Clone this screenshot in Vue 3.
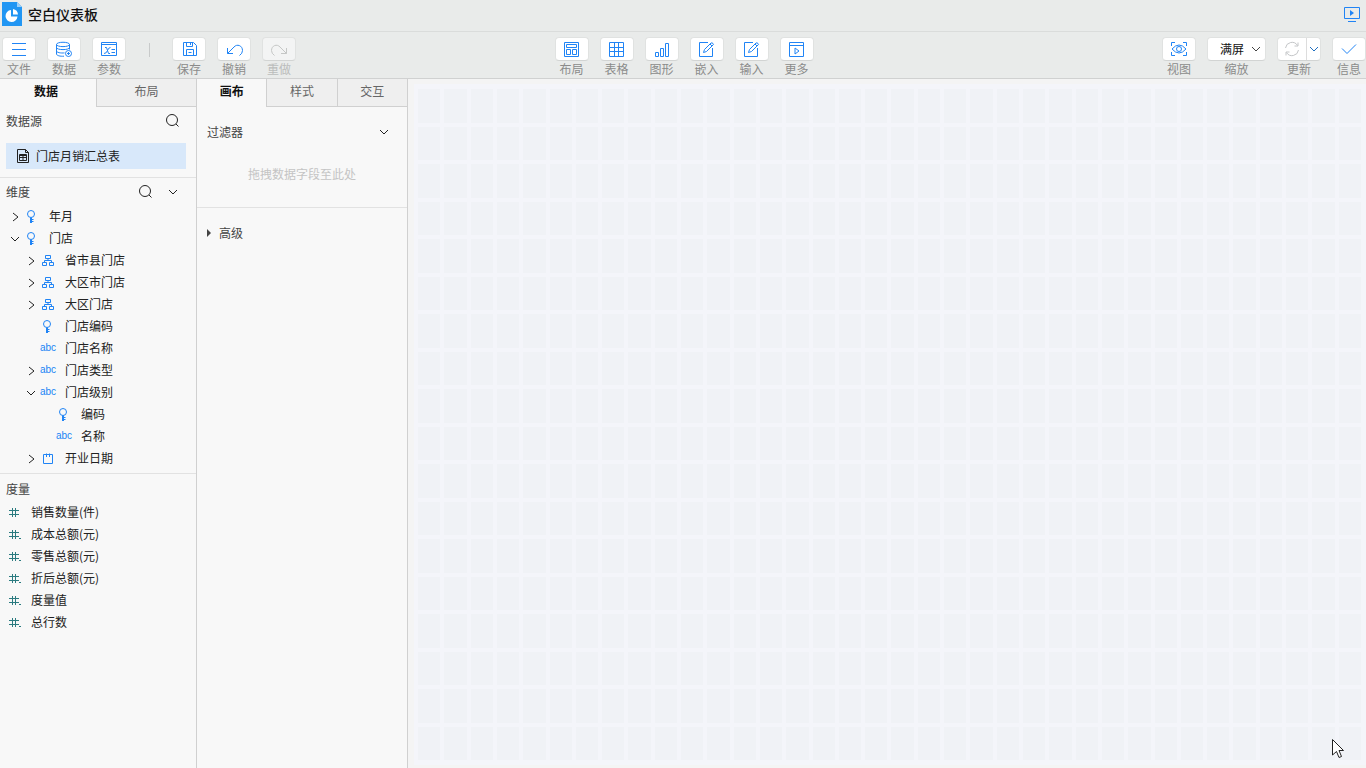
<script setup>
import { ref } from 'vue'

const icons = {
  file: 'M2 3.5H16M2 9.5H16M2 15.5H16',
  data: 'M1.5 4.5C1.5 1.5 14.5 1.5 14.5 4.5C14.5 7.3 1.5 7.3 1.5 4.5V14C1.5 15.5 5 16.5 9 16.2M14.5 4.5V9.5M1.5 7.5C1.5 10.3 14.5 10.3 14.5 7.5M1.5 10.8C1.5 12.6 6 13.3 9.5 12.9M10.5 13.5A3 3 0 1 0 16.5 13.5A3 3 0 1 0 10.5 13.5M12 13.5H15M13.5 12V15',
  params: 'M1.5 2.5H16.5V15.5H1.5ZM1.5 4.5H16.5M5 7.500H6.500L8.500 13.500H10M10.500 7.500Q8.500 7.500 7.500 10.500T4 13.500M11.500 9.500H15M11.500 12.500H15',
  save: 'M3.500 2.500H13.500L16.500 5.500V15.500H3.500ZM6.500 2.500V6.500H12.500V2.500M10.500 3V5M6.500 15.500V9.500H13.500V15.500M8.500 12.500H11.500',
  undo: 'M2.500 8V13.500H8M2.500 13.500L9 7C12 3.500 17.500 5.500 17.500 10.500Q17.500 13.500 14.500 15.500',
  redo: 'M16.500 8V13.500H11M16.500 13.500L10 7C7 3.500 1.500 5.500 1.500 10.500Q1.500 13.500 4.500 15.500',
  layout: 'M1.500 2.500H15.500V16.500H1.500ZM3.500 4.500H13.500V7.500H3.500ZM3.500 9.500H7.500V14.500H3.500ZM9.500 9.500H13.500V14.500H9.500Z',
  table: 'M1.500 2.500H15.500V16.500H1.500ZM1.500 7.500H15.500M1.500 11.500H15.500M6.500 2.500V16.500M10.500 2.500V16.500',
  chart: 'M2.500 12.500H5.500V16.500H2.500ZM7.500 8.500H10.500V16.500H7.500ZM12.500 3.500H15.500V16.500H12.500Z',
  edit: 'M10 2.500H1.500V16.500H14.500V8M5.500 12.500L6.500 9.500L13 3Q14 2.500 15 3.500T15 5L8.500 11.500ZM12 4L14 6',
  more: 'M1.500 2.500H15.500V16.500H1.500ZM1.500 5.500H15.500M7 8V14L11 11Z',
  view: 'M1.500 6V2.500H5M13 2.500H16.500V6M16.500 12V15.500H13M5 15.500H1.500V12M2 9Q9 1 16 9Q9 17 2 9ZM6.500 9A2.500 2.500 0 1 0 11.500 9A2.500 2.500 0 1 0 6.500 9',
  info: 'M2 8.500L7 13.500L16 4.500',
  refresh: 'M2.500 8A6.500 6.500 0 0 1 14.500 5.500M15 2.500V6H11.500M15.500 10A6.500 6.500 0 0 1 3.500 12.500M3 15.500V12H6.500',
}

const leftTools = [
  { icon: 'file', label: '文件' },
  { icon: 'data', label: '数据' },
  { icon: 'params', label: '参数' },
]
const historyTools = [
  { icon: 'save', label: '保存' },
  { icon: 'undo', label: '撤销' },
  { icon: 'redo', label: '重做', disabled: true },
]
const insertTools = [
  { icon: 'layout', label: '布局' },
  { icon: 'table', label: '表格' },
  { icon: 'chart', label: '图形' },
  { icon: 'edit', label: '嵌入' },
  { icon: 'edit', label: '输入' },
  { icon: 'more', label: '更多' },
]

const dimensions = [
  { name: '年月', level: 0, type: 'key', state: 'closed' },
  { name: '门店', level: 0, type: 'key', state: 'open' },
  { name: '省市县门店', level: 1, type: 'tree', state: 'closed' },
  { name: '大区市门店', level: 1, type: 'tree', state: 'closed' },
  { name: '大区门店', level: 1, type: 'tree', state: 'closed' },
  { name: '门店编码', level: 1, type: 'key' },
  { name: '门店名称', level: 1, type: 'abc' },
  { name: '门店类型', level: 1, type: 'abc', state: 'closed' },
  { name: '门店级别', level: 1, type: 'abc', state: 'open' },
  { name: '编码', level: 2, type: 'key' },
  { name: '名称', level: 2, type: 'abc' },
  { name: '开业日期', level: 1, type: 'date', state: 'closed' },
]
const typeIcons = {
  key: 'M3.500 6A3.500 3.500 0 1 0 10.500 6A3.500 3.500 0 1 0 3.500 6M6.500 9.500V15M7.500 9.500V15M7 11.500H9.500M7 13.500H9.500',
  tree: 'M5.500 3.500H10.500V6.500H5.500ZM8 6.500V8.500M4.500 10.500V8.500H11.500V10.500M2.500 10.500H6.500V13.500H2.500ZM9.500 10.500H13.500V13.500H9.500Z',
  date: 'M3.500 4.500H12.500V13.500H3.500ZM6.500 3.500V7M9.500 3.500V7',
}

const measures = [
  { name: '销售数量(件)', decimal: false },
  { name: '成本总额(元)', decimal: true },
  { name: '零售总额(元)', decimal: true },
  { name: '折后总额(元)', decimal: true },
  { name: '度量值', decimal: true },
  { name: '总行数', decimal: true },
]

const searchPath = 'M1.500 7A5.500 5.500 0 1 0 12.500 7A5.500 5.500 0 1 0 1.500 7M11 11L13.500 13.500'
const sideTab = ref('数据')
const panelTab = ref('画布')
const zoom = ref('满屏')
const cells = 36 * 18
</script>

<template>
  <div class="app">
    <header class="title-bar">
      <svg class="logo" viewBox="0 0 20 24" aria-hidden="true">
        <path d="M0 0H15L20 5V24H0Z" fill="#2196f3" />
        <path d="M15 0L20 5H15Z" fill="#9ccff8" />
        <path d="M9 8A6 6 0 1 0 15.500 14.500H9Z" fill="#fff" />
        <path d="M11 7A6 6 0 0 1 16 12.500H11Z" fill="#fff" />
      </svg>
      <h1>空白仪表板</h1>
      <button class="present" aria-label="预览">
        <svg width="16" height="16" viewBox="0 0 16 16" aria-hidden="true">
          <path d="M0.500 1.500H15.500V12.500H0.500Z" fill="none" stroke="currentColor" />
          <path d="M4 15.500H12" stroke="currentColor" />
          <path d="M6 4V10L10 7Z" fill="currentColor" />
        </svg>
      </button>
    </header>

    <div class="toolbar">
      <div class="group">
        <label v-for="t in leftTools" :key="t.label" class="tool">
          <button class="tool-button"><svg class="icon" viewBox="0 0 18 18"><path :d="icons[t.icon]" /></svg></button>
          <span>{{ t.label }}</span>
        </label>
        <i class="separator"></i>
        <label v-for="t in historyTools" :key="t.label" class="tool" :class="{ disabled: t.disabled }">
          <button class="tool-button" :disabled="t.disabled"><svg class="icon" viewBox="0 0 18 18"><path :d="icons[t.icon]" /></svg></button>
          <span>{{ t.label }}</span>
        </label>
      </div>
      <div class="group">
        <label v-for="t in insertTools" :key="t.label" class="tool">
          <button class="tool-button"><svg class="icon" viewBox="0 0 18 18"><path :d="icons[t.icon]" /></svg></button>
          <span>{{ t.label }}</span>
        </label>
      </div>
      <div class="group end">
        <label class="tool">
          <button class="tool-button"><svg class="icon" viewBox="0 0 18 18"><path :d="icons.view" /></svg></button>
          <span>视图</span>
        </label>
        <div class="tool">
          <div class="select-box">
            <select id="zoom" v-model="zoom"><option>满屏</option></select>
            <svg class="caret" viewBox="0 0 10 10"><path d="M1 3L5 7L9 3" /></svg>
          </div>
          <label for="zoom">缩放</label>
        </div>
        <div class="tool">
          <div class="split">
            <button class="refresh" disabled aria-label="更新"><svg class="icon" viewBox="0 0 18 18"><path :d="icons.refresh" /></svg></button>
            <button class="drop" aria-label="更新选项"><svg class="small" viewBox="0 0 10 10"><path d="M1 3L5 7L9 3" /></svg></button>
          </div>
          <span>更新</span>
        </div>
        <label class="tool">
          <button class="tool-button"><svg class="icon" viewBox="0 0 18 18"><path :d="icons.info" /></svg></button>
          <span>信息</span>
        </label>
      </div>
    </div>

    <main class="workspace">
      <aside class="side">
        <div class="tabs" role="tablist">
          <button v-for="t in ['数据', '布局']" :key="t" role="tab" :aria-selected="sideTab === t" :class="{ active: sideTab === t }" @click="sideTab = t">{{ t }}</button>
        </div>
        <section class="sources">
          <div class="heading">
            <h2>数据源</h2>
            <button class="plain" aria-label="搜索数据源"><svg class="glyph" viewBox="0 0 16 16"><path :d="searchPath" /></svg></button>
          </div>
          <button class="source">
            <svg class="glyph" viewBox="0 0 16 16"><path d="M2.500 1.500H10.500L13.500 4.500V14.500H2.500ZM10.500 1.500V4.500H13.500M4.500 6.500H11.500V12.500H4.500ZM4.500 9.500H11.500M8 6.500V12.500M4.500 7.500H11.500" /></svg>
            门店月销汇总表
          </button>
        </section>
        <section class="dimensions">
          <div class="heading">
            <h2>维度</h2>
            <button class="plain" aria-label="搜索维度"><svg class="glyph" viewBox="0 0 16 16"><path :d="searchPath" /></svg></button>
            <button class="plain" aria-label="维度选项"><svg class="glyph" viewBox="0 0 16 16"><path d="M4 6L8 10L12 6" /></svg></button>
          </div>
          <ul>
            <li v-for="d in dimensions" :key="d.name" :class="'level-' + d.level">
              <button v-if="d.state" class="toggle" :aria-label="d.name" :aria-expanded="d.state === 'open'">
                <svg class="glyph" viewBox="0 0 16 16"><path :d="d.state === 'open' ? 'M3 7L7 11L11 7' : 'M5 5L10 9L5 13'" /></svg>
              </button>
              <i v-else class="toggle"></i>
              <span v-if="d.type === 'abc'" class="abc">abc</span>
              <svg v-else class="glyph blue" viewBox="0 0 16 16"><path :d="typeIcons[d.type]" /></svg>
              <span class="name">{{ d.name }}</span>
            </li>
          </ul>
        </section>
        <section class="measures">
          <div class="heading"><h2>度量</h2></div>
          <ul>
            <li v-for="m in measures" :key="m.name">
              <svg class="glyph hash" viewBox="0 0 16 16">
                <path d="M3 6.500H13M3 10.500H13M6.500 4V13M9.500 4V13" />
                <path v-if="m.decimal" d="M13 12.500H15" />
              </svg>
              <span class="name">{{ m.name }}</span>
            </li>
          </ul>
        </section>
      </aside>

      <aside class="panel">
        <div class="tabs" role="tablist">
          <button v-for="t in ['画布', '样式', '交互']" :key="t" role="tab" :aria-selected="panelTab === t" :class="{ active: panelTab === t }" @click="panelTab = t">{{ t }}</button>
        </div>
        <section class="filters">
          <div class="filter-head">
            <h2>过滤器</h2>
            <button class="plain" aria-label="过滤器选项"><svg class="glyph" viewBox="0 0 16 16"><path d="M4 6L8 10L12 6" /></svg></button>
          </div>
          <p>拖拽数据字段至此处</p>
        </section>
        <button class="advanced">
          <svg class="arrow" viewBox="0 0 4 8"><path d="M0 0L4 4L0 8Z" /></svg>高级
        </button>
      </aside>

      <div class="stage">
        <div class="canvas"><i v-for="n in cells" :key="n"></i></div>
        <svg class="pointer" viewBox="0 0 12 20" aria-hidden="true">
          <path d="M0.500 0.500V16L4.500 12.500L7 18.500L9.500 17.500L7 11.500H11.500Z" fill="#fff" stroke="#222" />
        </svg>
      </div>
    </main>
  </div>
</template>

<style>
body {
  margin: 0;
}
</style>

<style scoped>
.app {
  display: flex;
  flex-direction: column;
  min-height: 100vh;
  font: 12px/16px "Noto Sans CJK SC", sans-serif;
  color: #222;
  background: #f8f8f8;
}
button,
select {
  margin: 0;
  padding: 0;
  border: 0;
  background: none;
  font: inherit;
  color: inherit;
}
h1,
h2,
p,
ul {
  margin: 0;
  padding: 0;
  font-weight: 400;
  list-style: none;
}
svg {
  display: block;
  flex: none;
}
.title-bar {
  display: flex;
  align-items: center;
  box-sizing: border-box;
  height: 32px;
  padding: 0 6px 3px 2px;
  background: #e9ebea;
  border-bottom: 1px solid #dadcdb;
}
.logo {
  width: 20px;
  height: 24px;
  margin-right: 6px;
}
h1 {
  flex: 1;
  font-size: 14px;
  font-weight: 500;
  line-height: 20px;
  color: #111;
}
.present {
  color: #2084f5;
}
.toolbar {
  display: grid;
  grid-template-columns: 1fr auto 1fr;
  height: 41px;
  padding: 5px 0 0 2px;
  background: #e9ebea;
  border-bottom: 1px solid #d0d1d1;
}
.group {
  display: flex;
  gap: 11px;
}
.end {
  justify-content: flex-end;
}
.tool {
  display: flex;
  flex-direction: column;
  align-items: center;
  color: #8b8b8b;
}
.tool-button,
.select-box,
.split {
  display: flex;
  align-items: center;
  justify-content: center;
  box-sizing: border-box;
  width: 34px;
  height: 24px;
  color: #2084f5;
  background: #fff;
  border: 1px solid #e0e2e1;
  border-bottom-color: #d2d4d3;
  border-radius: 4px;
}
.icon {
  width: 18px;
  height: 18px;
  fill: none;
  stroke: currentColor;
}
.disabled {
  color: #bbbdbc;
}
.disabled .tool-button {
  color: #c5c7c6;
  background: #f3f4f4;
}
.separator {
  width: 1px;
  height: 14px;
  margin: 6px 11px 0 12px;
  background: #c8caca;
}
.select-box {
  position: relative;
  width: 59px;
  color: #111;
}
.select-box select {
  appearance: none;
  width: 100%;
  height: 22px;
  padding-left: 12px;
}
.caret {
  position: absolute;
  right: 4px;
  top: 6px;
  pointer-events: none;
}
.caret,
.small {
  width: 10px;
  height: 10px;
  fill: none;
  stroke: #444;
}
.split {
  width: 44px;
}
.refresh {
  display: flex;
  justify-content: center;
  flex: 1;
  color: #c4c6c8;
}
.drop {
  display: flex;
  align-items: center;
  justify-content: center;
  width: 14px;
  height: 22px;
  border-left: 1px solid #ddd;
}
.drop .small {
  stroke: #1f6fc0;
}
.workspace {
  display: flex;
  flex: 1;
}
.side,
.panel {
  flex: none;
  box-sizing: border-box;
  border-right: 1px solid #d0d0d0;
}
.side {
  width: 197px;
}
.panel {
  width: 211px;
}
.tabs {
  display: flex;
}
.tabs button {
  flex: 1;
  height: 28px;
  padding-bottom: 3px;
  color: #666;
  background: #efefef;
  border-bottom: 1px solid #d0d0d0;
}
.tabs button + button {
  border-left: 1px solid #d0d0d0;
}
.tabs .active {
  font-weight: 700;
  color: #111;
  background: none;
  border-bottom-color: transparent;
}
.side .tabs .active {
  flex: none;
  width: 96px;
  padding-right: 4px;
}
.glyph {
  width: 16px;
  height: 16px;
  fill: none;
  stroke: #222;
}
h2 {
  flex: 1;
  font-size: 12px;
  line-height: 16px;
  color: #444;
}
.heading {
  display: flex;
  align-items: center;
  gap: 11px;
  height: 27px;
  padding: 0 15px 0 6px;
}
.sources {
  padding-bottom: 8px;
  border-bottom: 1px solid #e2e2e2;
}
.sources .heading {
  height: 28px;
  padding-bottom: 8px;
}
.source {
  display: flex;
  align-items: center;
  gap: 5px;
  width: 180px;
  height: 26px;
  margin-left: 6px;
  padding-left: 9px;
  background: #d8e8fa;
}
.dimensions {
  padding-bottom: 4px;
  border-bottom: 1px solid #e2e2e2;
}
li {
  display: flex;
  align-items: center;
  height: 22px;
}
.level-0 {
  padding-left: 8px;
}
.level-1 {
  padding-left: 24px;
}
.level-2 {
  padding-left: 40px;
}
.toggle {
  width: 16px;
}
.blue {
  stroke: #2084f5;
}
.abc {
  width: 16px;
  font: 10px/16px "Liberation Sans", sans-serif;
  text-align: center;
  color: #2084f5;
}
.dimensions .name {
  margin-left: 9px;
}
.measures .heading {
  height: 27px;
  padding-top: 2px;
  box-sizing: border-box;
}
.measures li {
  gap: 9px;
  padding-left: 6px;
}
.hash {
  stroke: #2b7b80;
}
.filters {
  height: 100px;
  border-bottom: 1px solid #e2e2e2;
}
.filter-head {
  display: flex;
  align-items: center;
  padding: 17px 15px 0 10px;
}
.filters p {
  margin-top: 26px;
  text-align: center;
  color: #c4c4c4;
}
.advanced {
  display: flex;
  align-items: center;
  gap: 8px;
  margin: 17px 0 0 10px;
  color: #444;
}
.arrow {
  width: 4px;
  height: 8px;
  fill: #444;
}
.stage {
  position: relative;
  display: flex;
  flex: 1;
  padding: 5px 0 3px 6px;
  background: #f4f4f4;
}
.canvas {
  display: grid;
  flex: 1;
  grid-template-columns: repeat(36, 1fr);
  grid-template-rows: repeat(18, 1fr);
  gap: 4px;
  padding: 5px 5px 5px 4px;
  background: #f4f5fa;
}
.canvas i {
  background: #f0f2f6;
}
.pointer {
  position: absolute;
  right: 22px;
  bottom: 9px;
  width: 12px;
  height: 20px;
}
</style>
